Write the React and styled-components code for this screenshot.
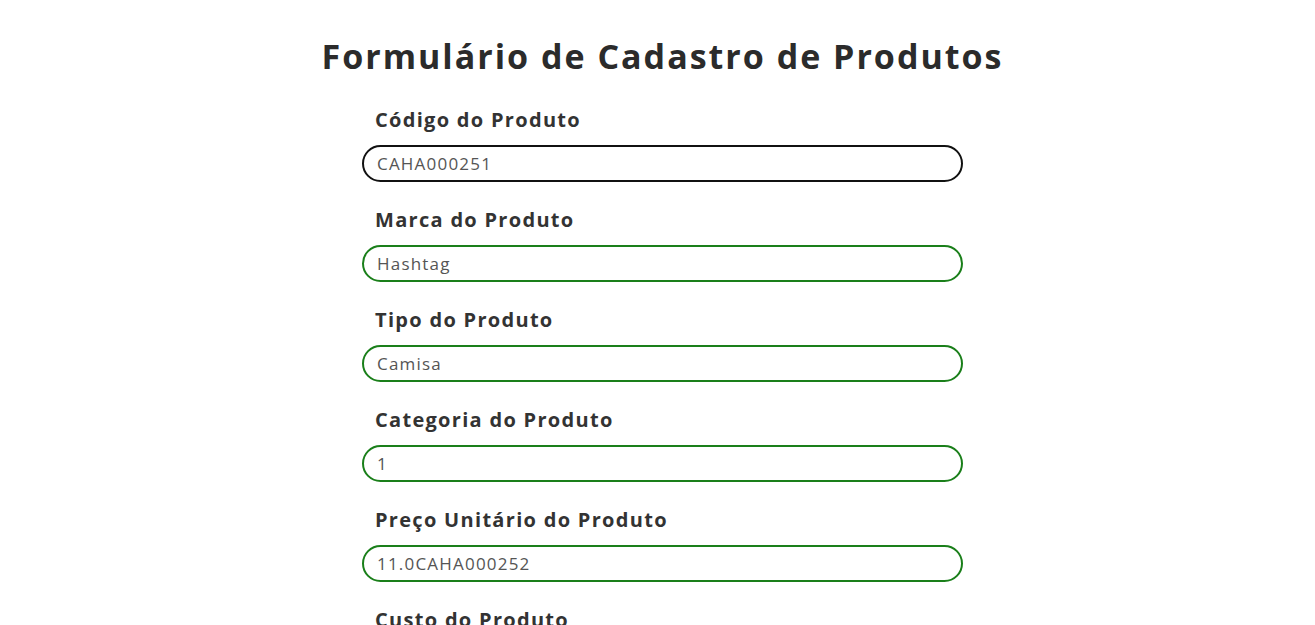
import React from "react";
import styled, { createGlobalStyle } from "styled-components";

const GlobalStyle = createGlobalStyle`
  html, body { margin: 0; padding: 0; background: #ffffff; }
  body { font-family: "Open Sans", "Liberation Sans", sans-serif; }
  * { box-sizing: border-box; }
`;

const Page = styled.main`
  padding: 36px 0 40px 10px;
  display: flex;
  flex-direction: column;
  align-items: center;
`;

const Title = styled.h1`
  margin: 0 0 32px;
  font-size: 34px;
  line-height: 40px;
  font-weight: 700;
  color: #2b2b2b;
  letter-spacing: 2px;
`;

const Form = styled.form`
  width: 601px;
  display: flex;
  flex-direction: column;
`;

const Field = styled.div`
  display: flex;
  flex-direction: column;
  margin-bottom: 26px;
`;

const Label = styled.label`
  display: block;
  margin: 0 0 13px 13px;
  font-size: 20px;
  line-height: 24px;
  font-weight: 700;
  color: #333333;
  letter-spacing: 1.3px;
`;

const Input = styled.input`
  width: 100%;
  height: 37px;
  padding: 0 13px;
  border: 2px solid ${(p) => (p.$focused ? "#111111" : "#1a7f1a")};
  border-radius: 19px;
  outline: none;
  background: #ffffff;
  font-family: inherit;
  font-size: 17px;
  font-weight: 400;
  letter-spacing: 1.2px;
  color: #555555;
`;

const fields = [
  { label: "Código do Produto", value: "CAHA000251", focused: true },
  { label: "Marca do Produto", value: "Hashtag" },
  { label: "Tipo do Produto", value: "Camisa" },
  { label: "Categoria do Produto", value: "1" },
  { label: "Preço Unitário do Produto", value: "11.0CAHA000252" },
  { label: "Custo do Produto", value: "" },
  { label: "Observações", value: "" },
];

export default function App() {
  return (
    <>
      <GlobalStyle />
      <Page>
        <Title>Formulário de Cadastro de Produtos</Title>
        <Form onSubmit={(e) => e.preventDefault()}>
          {fields.map((f) => (
            <Field key={f.label}>
              <Label>{f.label}</Label>
              <Input $focused={f.focused} defaultValue={f.value} />
            </Field>
          ))}
        </Form>
      </Page>
    </>
  );
}
